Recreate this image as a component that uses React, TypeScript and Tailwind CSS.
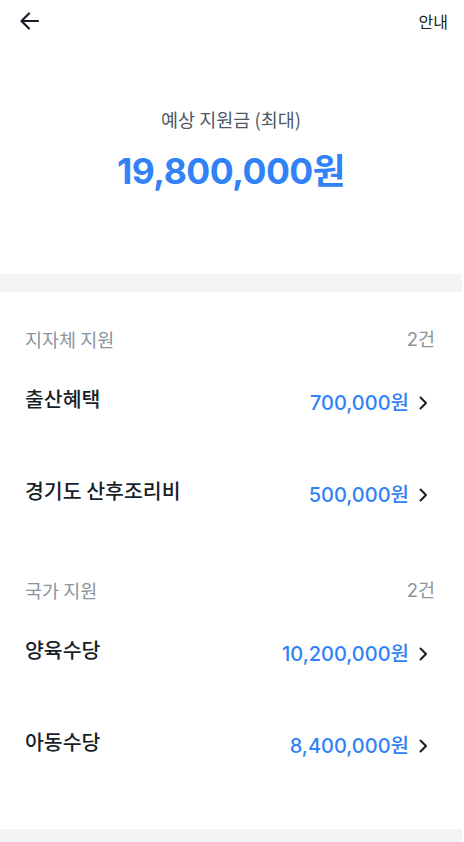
import React from 'react';

const kr = { fontFamily: '"Noto Sans CJK KR", sans-serif' };
const num = { fontFamily: '"Inter", "Noto Sans CJK KR", sans-serif' };

const sections = [
  {
    label: '지자체 지원',
    count: '2건',
    items: [
      { name: '출산혜택', amount: '700,000원' },
      { name: '경기도 산후조리비', amount: '500,000원' },
    ],
  },
  {
    label: '국가 지원',
    count: '2건',
    items: [
      { name: '양육수당', amount: '10,200,000원' },
      { name: '아동수당', amount: '8,400,000원' },
    ],
  },
];

const Chevron = () => (
  <svg width="10" height="16" viewBox="0 0 10 16" fill="none" className="ml-[9px]">
    <path d="M2.5 2.5L8 8l-5.5 5.5" stroke="#191f28" strokeWidth="2" strokeLinecap="round" strokeLinejoin="round" />
  </svg>
);

const App = () => {
  return (
    <div className="flex min-h-[842px] w-[464px] bg-white">
      <div className="flex w-[462px] flex-col">
        <header className="flex h-[42px] shrink-0 items-center justify-between pl-[19px] pr-[14px]">
          <svg width="22" height="20" viewBox="0 0 22 20" fill="none">
            <path d="M19 10H3M10 2.5L2.5 10 10 17.5" stroke="#191f28" strokeWidth="2.2" strokeLinecap="round" strokeLinejoin="round" />
          </svg>
          <span className="text-[16px] text-[#191f28]" style={kr}>안내</span>
        </header>

        <section className="flex shrink-0 flex-col items-center pb-[82px] pt-[66px]">
          <p className="flex h-[24px] items-center text-[18.5px] text-[#4e5968]" style={kr}>예상 지원금 (최대)</p>
          <p
            className="mt-[20px] flex h-[40px] items-center text-[35.5px] font-bold tracking-[-0.5px] text-[#3182f6]"
            style={num}
          >
            19,800,000원
          </p>
        </section>

        <div className="h-[18px] shrink-0 bg-[#f2f4f6]" />

        <section className="shrink-0 pb-[75px] pt-[36px]">
          {sections.map((sec, si) => (
            <div key={sec.label} className={si > 0 ? 'mt-[76px]' : ''}>
              <div className="flex h-[24px] items-center justify-between pl-[25px] pr-[27px] text-[18.5px] text-[#8b95a1]" style={kr}>
                <span>{sec.label}</span>
                <span style={num}>{sec.count}</span>
              </div>
              {sec.items.map((item, ii) => (
                <div
                  key={item.name}
                  className={`flex h-[26px] items-start justify-between pl-[25px] pr-[34px] ${ii === 0 ? 'mt-[33px]' : 'mt-[66px]'}`}
                >
                  <span className="flex h-[26px] items-center text-[20.5px] font-medium text-[#191f28]" style={kr}>
                    {item.name}
                  </span>
                  <span className="mt-[5px] flex h-[26px] items-center">
                    <span className="text-[20px] font-medium text-[#3182f6]" style={num}>{item.amount}</span>
                    <Chevron />
                  </span>
                </div>
              ))}
            </div>
          ))}
        </section>

        <div className="grow bg-[#f2f4f6]" />
      </div>
    </div>
  );
};

export default App;
